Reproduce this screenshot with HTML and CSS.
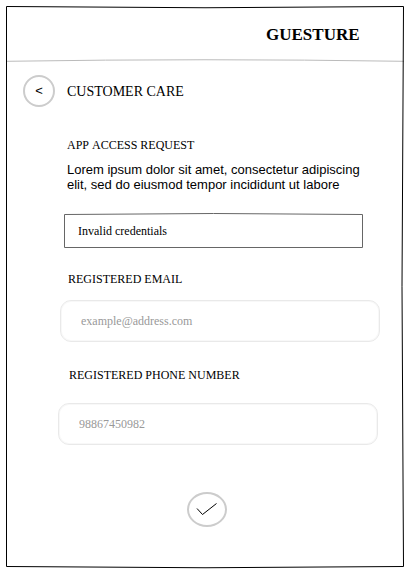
FILE: index.html
```html
<!DOCTYPE html>
<html lang="en">
<head>
<meta charset="utf-8">
<title>Guesture – Customer Care</title>
<link rel="stylesheet" href="styles.css">
</head>
<body>
<div class="screen">
  <svg class="frame" width="417" height="572" viewBox="0 0 417 572" aria-hidden="true">
    <path d="M6.5 6.5 Q205 9 403.5 6.5 Q400.5 286 403.5 566.5 Q205 569 6.5 566.5 Z"/>
  </svg>
  <header class="header">
    <h1 class="brand">GUESTURE</h1>
    <svg class="divider" width="398" height="4" viewBox="0 0 398 4" aria-hidden="true">
      <path d="M0 2.3 Q199 -0.8 398 2.3"/>
    </svg>
  </header>
  <div class="title-row">
    <button class="back" aria-label="Back">&lt;</button>
    <h2 class="title">CUSTOMER CARE</h2>
  </div>
  <main class="content">
    <h3 class="label">APP ACCESS REQUEST</h3>
    <p class="description">Lorem ipsum dolor sit amet, consectetur adipiscing elit, sed do eiusmod tempor incididunt ut labore</p>
    <div class="alert">
      <svg class="alert-outline" width="300" height="36" viewBox="0 0 300 36" aria-hidden="true">
        <path d="M.5 1.5 Q149.5 -.5 298.5 1.5 V34.5 H.5 Z"/>
      </svg>
      Invalid credentials
    </div>
    <label class="label email-label" for="email">REGISTERED EMAIL</label>
    <input class="field email-field" id="email" type="email" placeholder="example@address.com">
    <label class="label phone-label" for="phone">REGISTERED PHONE NUMBER</label>
    <input class="field phone-field" id="phone" type="tel" placeholder="98867450982">
    <button class="submit" aria-label="Submit">
      <svg width="22" height="14" viewBox="0 0 22 14" aria-hidden="true"><path d="M1 5.5 L6.5 11.5 L20.5 .5"/></svg>
    </button>
  </main>
</div>
</body>
</html>
```
FILE: styles.css
```css
* {
  box-sizing: border-box;
}

body {
  margin: 0;
  background: #fff;
  color: #000;
  font-family: "Liberation Serif", serif;
}

.screen {
  position: relative;
  width: 417px;
  height: 572px;
  overflow: hidden;
}

.frame {
  position: absolute;
  inset: 0;
  pointer-events: none;
}

.frame path {
  fill: none;
  stroke: #000;
}

.header {
  display: flex;
  flex-direction: column;
  height: 63px;
  padding-left: 6px;
}

.brand {
  margin: 25px 0 0 260px;
  font-size: 17px;
  line-height: 20px;
}

.divider {
  margin-top: 14px;
}

.divider path {
  fill: none;
  stroke: #bbb;
}

.title-row {
  display: flex;
  align-items: center;
  gap: 12px;
  padding: 12px 0 0 23px;
}

.back {
  width: 32px;
  height: 32px;
  padding: 0;
  border: 2px solid #ccc;
  border-radius: 50%;
  background: #fff;
  color: #000;
  font: 13px/28px "Liberation Sans", sans-serif;
}

.title {
  margin: 2px 0 0;
  font-size: 14px;
  font-weight: 400;
  line-height: 16px;
}

.content {
  display: flex;
  flex-direction: column;
  align-items: flex-start;
  padding: 31px 0 0 67px;
}

.label {
  margin: 0;
  font-size: 12px;
  font-weight: 400;
  font-kerning: none;
  line-height: 14px;
}

.description {
  width: 300px;
  margin: 10px 0 0;
  font: 13px/15px "Liberation Sans", sans-serif;
}

.alert {
  position: relative;
  width: 299px;
  height: 35px;
  margin: 21px 0 0 -3px;
  padding-left: 14px;
  font-size: 12px;
  line-height: 36px;
}

.alert-outline {
  position: absolute;
  top: 0;
  left: 0;
}

.alert-outline path {
  fill: none;
  stroke: #666;
}

.email-label {
  margin: 24px 0 0 1px;
}

.phone-label {
  margin: 26px 0 0 2px;
}

.field {
  width: 320px;
  height: 42px;
  padding: 0 20px;
  border: 1px solid #e9e9e9;
  border-radius: 11px;
  box-shadow: inset 0 0 0 1px #f8f8f8;
  background: #fff;
  color: #000;
  font: 12px "Liberation Serif", serif;
}

.field::placeholder {
  color: #999;
  opacity: 1;
}

.email-field {
  margin: 14px 0 0 -7px;
}

.phone-field {
  margin: 21px 0 0 -9px;
}

.submit {
  display: flex;
  align-items: center;
  justify-content: center;
  width: 40px;
  height: 35px;
  margin: 47px 0 0 120px;
  padding: 0;
  border: 2px solid #ccc;
  border-radius: 50%;
  background: #fff;
}

.submit path {
  fill: none;
  stroke: #000;
}
```
